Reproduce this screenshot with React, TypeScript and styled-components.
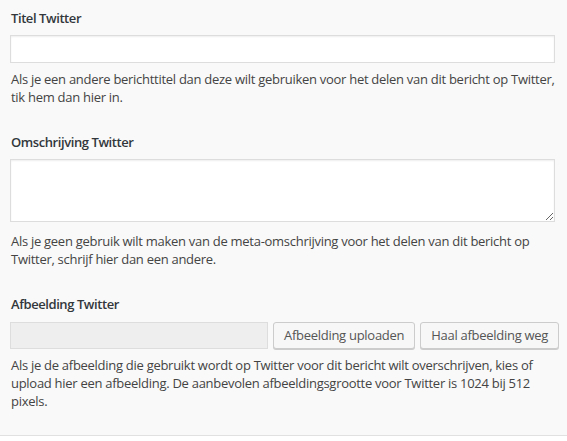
import React from 'react'
import styled, { createGlobalStyle } from 'styled-components'

const GlobalStyle = createGlobalStyle`
  html, body {
    margin: 0;
    padding: 0;
    background: #ffffff;
  }
  body {
    font-family: "Open Sans", "Noto Sans", "Liberation Sans", sans-serif;
    font-size: 13px;
    letter-spacing: -0.28px;
    color: #444;
  }
`

const Panel = styled.div`
  background: #f9f9f9;
  border-bottom: 1px solid #e1e1e1;
  padding: 8px 12px 0 10px;
  height: 436px;
  box-sizing: border-box;
`

const Field = styled.div`
  margin-bottom: 26px;
`

const Label = styled.label`
  display: block;
  font-weight: 600;
  font-size: 13px;
  letter-spacing: -0.42px;
  color: #32373c;
  line-height: 20px;
  margin: 0 0 7px 1px;
`

const TextInput = styled.input`
  display: block;
  width: 100%;
  box-sizing: border-box;
  height: 28px;
  margin: 0;
  padding: 3px 5px;
  border: 1px solid #ddd;
  background: #fff;
  box-shadow: inset 0 1px 2px rgba(0, 0, 0, 0.07);
  font: inherit;
  outline: none;
`

const TextArea = styled.textarea`
  display: block;
  width: 100%;
  box-sizing: border-box;
  height: 63px;
  margin: 0;
  padding: 3px 5px;
  border: 1px solid #ddd;
  background: #fff;
  box-shadow: inset 0 1px 2px rgba(0, 0, 0, 0.07);
  font: inherit;
  resize: vertical;
  outline: none;
`

const Help = styled.p<{ $gap: number }>`
  margin: ${(p) => p.$gap}px 0 0 1px;
  line-height: 18px;
  color: #444;
`

const UploadRow = styled.div`
  display: flex;
  align-items: flex-start;
  gap: 5px;
  padding-top: 1px;
`

const ImageUrl = styled.input`
  flex: 0 0 258px;
  box-sizing: border-box;
  height: 27px;
  margin: 0;
  border: 1px solid #ddd;
  background: #eee;
  font: inherit;
  outline: none;
`

const Button = styled.button`
  height: 27px;
  box-sizing: border-box;
  padding: 0 10px 1px;
  border: 1px solid #ccc;
  border-radius: 3px;
  background: #f7f7f7;
  box-shadow: 0 1px 0 #ccc;
  color: #555;
  font: inherit;
  letter-spacing: inherit;
  font-size: 13px;
  white-space: nowrap;
  cursor: pointer;
`

export default function App() {
  return (
    <>
      <GlobalStyle />
      <Panel>
        <Field>
          <Label htmlFor="tw-title">Titel Twitter</Label>
          <TextInput id="tw-title" type="text" />
          <Help $gap={7}>
            Als je een andere berichttitel dan deze wilt gebruiken voor het delen van dit bericht op Twitter,
            tik hem dan hier in.
          </Help>
        </Field>
        <Field>
          <Label htmlFor="tw-desc">Omschrijving Twitter</Label>
          <TextArea id="tw-desc" />
          <Help $gap={10}>
            Als je geen gebruik wilt maken van de meta-omschrijving voor het delen van dit bericht op
            Twitter, schrijf hier dan een andere.
          </Help>
        </Field>
        <Field>
          <Label htmlFor="tw-img">Afbeelding Twitter</Label>
          <UploadRow>
            <ImageUrl id="tw-img" type="text" readOnly />
            <Button>Afbeelding uploaden</Button>
            <Button>Haal afbeelding weg</Button>
          </UploadRow>
          <Help $gap={7}>
            Als je de afbeelding die gebruikt wordt op Twitter voor dit bericht wilt overschrijven, kies of
            upload hier een afbeelding. De aanbevolen afbeeldingsgrootte voor Twitter is 1024 bij 512
            pixels.
          </Help>
        </Field>
      </Panel>
    </>
  )
}
